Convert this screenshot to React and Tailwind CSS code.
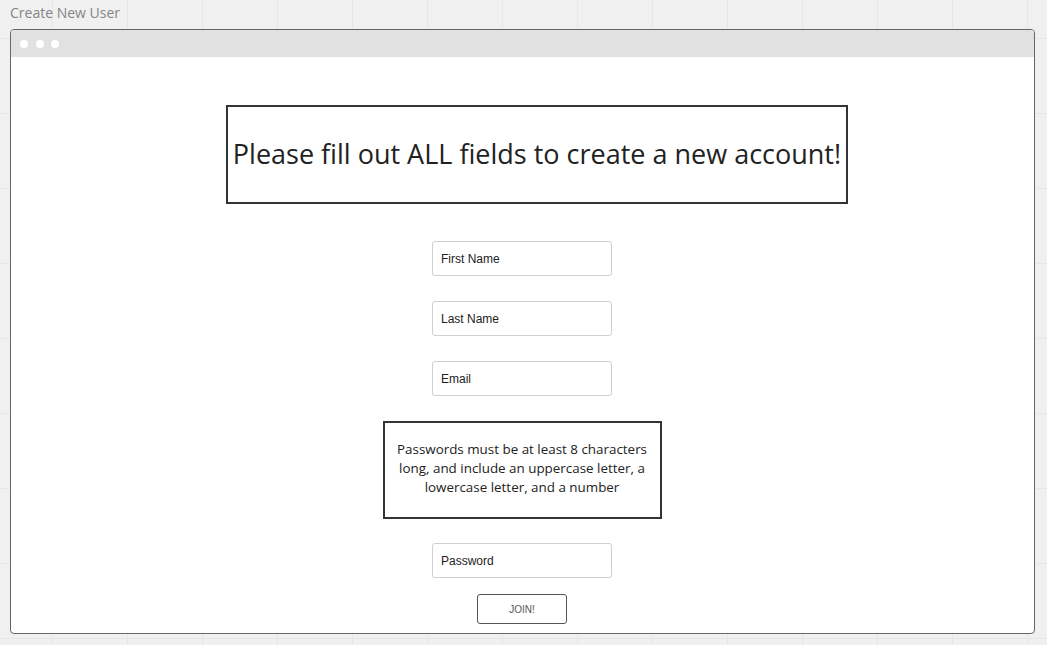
export default function App() {
  const fields = ['First Name', 'Last Name', 'Email'];

  return (
    <div className="h-[645px] w-full overflow-hidden bg-[#f0f0f0] bg-[linear-gradient(to_right,#e6e6e6_1px,transparent_1px),linear-gradient(to_bottom,#e6e6e6_1px,transparent_1px)] bg-[size:75px_75px] bg-[position:52px_38px] font-['Open_Sans',sans-serif]">
      {/* Page title */}
      <div className="h-[29px] pl-[10px] pt-[4px] text-[14px] leading-[18px] text-[#858585]">Create New User</div>

      {/* Browser window */}
      <div className="mx-[10px] h-[605px] w-[1025px] overflow-hidden rounded-[4px] border border-[#666] bg-white">
        <div className="flex h-[27px] items-center gap-[7.5px] bg-[#e1e1e1] pl-[9px]">
          <span className="h-[8px] w-[8px] rounded-full bg-white" />
          <span className="h-[8px] w-[8px] rounded-full bg-white" />
          <span className="h-[8px] w-[8px] rounded-full bg-white" />
        </div>

        <div className="flex flex-col items-center pr-[1px]">
          <div className="ml-[30px] mt-[48px] flex h-[99px] w-[622px] items-center justify-center border-2 border-[#333] text-[27px] text-[#222]">
            Please fill out ALL fields to create a new account!
          </div>

          <div className="mt-[37px] flex flex-col gap-[25px]">
            {fields.map((f) => (
              <div
                key={f}
                className="flex h-[35px] w-[180px] items-center rounded-[3px] border border-[#cfcfcf] bg-white pl-[8px] font-['Liberation_Sans',Arial,sans-serif] text-[12px] text-[#222]"
              >
                {f}
              </div>
            ))}
          </div>

          <div className="mt-[25px] flex h-[98px] w-[279px] items-center justify-center border-2 border-[#333] px-[8px] pb-[4px] text-center text-[13.4px] leading-[19px] text-[#222]">
            Passwords must be at least 8 characters long, and include an uppercase letter, a lowercase letter, and a number
          </div>

          <div className="mt-[24px] flex h-[35px] w-[180px] items-center rounded-[3px] border border-[#cfcfcf] bg-white pl-[8px] font-['Liberation_Sans',Arial,sans-serif] text-[12px] text-[#222]">
            Password
          </div>

          <button className="mt-[16px] flex h-[30px] w-[90px] items-center justify-center rounded-[3px] border border-[#555] bg-white font-['Liberation_Sans',Arial,sans-serif] text-[10px] text-[#555]">
            JOIN!
          </button>
        </div>
      </div>
    </div>
  );
}
